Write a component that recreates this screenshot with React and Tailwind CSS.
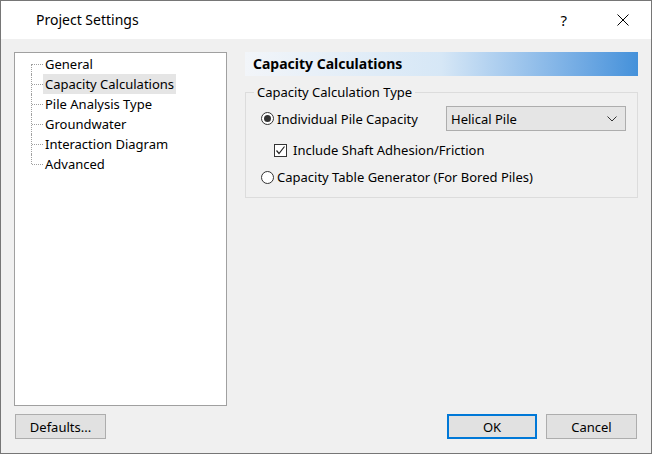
import React from "react";

const items = [
  "General",
  "Capacity Calculations",
  "Pile Analysis Type",
  "Groundwater",
  "Interaction Diagram",
  "Advanced",
];

function TreeRow({ label, index, last, selected }) {
  // dotted connector lines like the old Win32 tree view
  const vert =
    index === 0 ? "top-1/2 bottom-0" : last ? "top-0 h-1/2" : "top-0 bottom-0";
  return (
    <div className="flex h-[20px] items-stretch">
      <div className="relative ml-[16px] w-[12px]">
        <div className={`absolute left-0 border-l border-dotted border-[#a0a0a0] ${vert}`} />
        <div className="absolute left-[1px] right-0 top-[10px] border-t border-dotted border-[#a0a0a0]" />
      </div>
      <div className="flex items-center">
        <span className={`flex h-[20px] items-center px-[2px] ${selected ? "bg-[#e5e5e5]" : ""}`}>
          {label}
        </span>
      </div>
    </div>
  );
}

function Radio({ checked }) {
  return (
    <span className="flex h-[13px] w-[13px] items-center justify-center rounded-full border border-[#333] bg-white">
      {checked && <span className="h-[7px] w-[7px] rounded-full bg-[#333]" />}
    </span>
  );
}

export default function App() {
  return (
    <div
      className="flex h-[454px] w-[652px] flex-col border border-[#767676] bg-[#f0f0f0] text-[13px] leading-[18px] text-black"
      style={{ fontFamily: '"Noto Sans", "Open Sans", sans-serif' }}
    >
      {/* Title bar */}
      <div className="flex h-[38px] items-center bg-white">
        <div className="ml-[35px] text-[14px]">Project Settings</div>
        <div className="ml-auto mr-[22px] flex items-center gap-[50px]">
          <span className="text-[15px]">?</span>
          <svg width="12" height="12" viewBox="0 0 12 12">
            <path d="M0.5 0.5 L11.5 11.5 M11.5 0.5 L0.5 11.5" stroke="#000" strokeWidth="1" />
          </svg>
        </div>
      </div>

      {/* Body */}
      <div className="flex flex-1 flex-col px-[13px] pb-[14px] pt-[13px]">
        <div className="flex flex-1">
          {/* Tree */}
          <div className="w-[213px] border border-[#a0a0a0] bg-white pt-[1px]">
            {items.map((it, i) => (
              <TreeRow
                key={it}
                label={it}
                index={i}
                last={i === items.length - 1}
                selected={i === 1}
              />
            ))}
          </div>

          {/* Right panel */}
          <div className="ml-[18px] flex-1">
            <div className="flex h-[24px] items-center bg-gradient-to-r from-[#f2f5f9] via-[#d6e7f6] to-[#4491da] pl-[8px] text-[14px] font-bold">
              Capacity Calculations
            </div>
            <fieldset className="mt-[7px] border border-[#dcdcdc] pb-[10px] pl-[15px] pr-[11px]">
              <legend className="-ml-[7px] px-[3px]">Capacity Calculation Type</legend>
              <div className="mt-[5px] flex h-[25px] items-center">
                <Radio checked />
                <span className="ml-[3px]">Individual Pile Capacity</span>
                <div className="ml-auto flex h-[25px] w-[180px] items-center border border-[#adadad] bg-[#e5e5e5] pl-[4px] pr-[8px]">
                  <span>Helical Pile</span>
                  <svg className="ml-auto" width="10" height="6" viewBox="0 0 10 6">
                    <path d="M0.5 0.5 L5 5 L9.5 0.5" fill="none" stroke="#333" strokeWidth="1" />
                  </svg>
                </div>
              </div>
              <div className="mt-[9px] flex h-[20px] items-center pl-[13px]">
                <span className="flex h-[13px] w-[13px] items-center justify-center border border-[#333] bg-white">
                  <svg width="11" height="11" viewBox="0 0 11 11">
                    <path d="M1.5 5.5 L4 8.5 L9.5 1.5" fill="none" stroke="#222" strokeWidth="1.2" />
                  </svg>
                </span>
                <span className="ml-[6px]">Include Shaft Adhesion/Friction</span>
              </div>
              <div className="mt-[7px] flex h-[20px] items-center">
                <Radio />
                <span className="ml-[3px]">Capacity Table Generator (For Bored Piles)</span>
              </div>
            </fieldset>
          </div>
        </div>

        {/* Footer buttons */}
        <div className="mt-[8px] flex items-center">
          <button className="ml-[1px] h-[25px] w-[91px] border border-[#adadad] bg-[#e1e1e1]">
            Defaults...
          </button>
          <button className="ml-auto h-[25px] w-[90px] border-2 border-[#0078d7] bg-[#e1e1e1]">
            OK
          </button>
          <button className="ml-[9px] mr-[1px] h-[25px] w-[91px] border border-[#adadad] bg-[#e1e1e1]">
            Cancel
          </button>
        </div>
      </div>
    </div>
  );
}
